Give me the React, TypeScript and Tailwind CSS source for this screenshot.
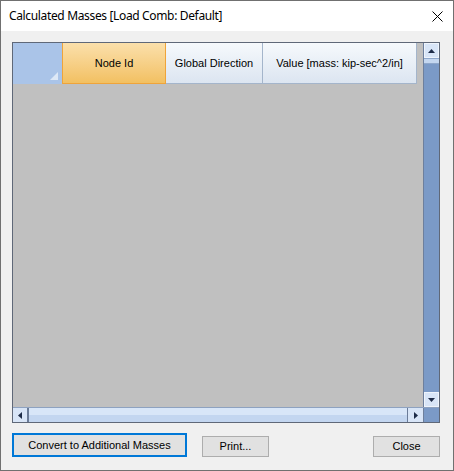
import React from "react";

const UpArrow = () => (
  <svg width="7" height="4" viewBox="0 0 7 4"><path d="M3.5 0 L7 4 L0 4 Z" fill="#1e2c48" /></svg>
);
const DownArrow = () => (
  <svg width="7" height="4" viewBox="0 0 7 4"><path d="M0 0 L7 0 L3.5 4 Z" fill="#1e2c48" /></svg>
);
const LeftArrow = () => (
  <svg width="4" height="7" viewBox="0 0 4 7"><path d="M4 0 L4 7 L0 3.5 Z" fill="#1e2c48" /></svg>
);
const RightArrow = () => (
  <svg width="4" height="7" viewBox="0 0 4 7"><path d="M0 0 L4 3.5 L0 7 Z" fill="#1e2c48" /></svg>
);

export default function App() {
  const ui = { fontFamily: '"Liberation Sans", Arial, sans-serif' };
  return (
    <div className="w-[454px] h-[471px] border border-[#707070] bg-[#f0f0f0] flex flex-col overflow-hidden">
      {/* title bar */}
      <div className="h-[30px] bg-white flex items-center justify-between pl-[8px] pr-[10px]">
        <span className="text-[12px] tracking-[-0.35px] text-black leading-none" style={{ fontFamily: '"Noto Sans", sans-serif' }}>
          Calculated Masses [Load Comb: Default]
        </span>
        <svg width="11" height="11" viewBox="0 0 11 11">
          <path d="M0.5 0.5 L10.5 10.5 M10.5 0.5 L0.5 10.5" stroke="#000" strokeWidth="1" />
        </svg>
      </div>

      {/* grid */}
      <div className="ml-[11px] mt-[11px] w-[428px] h-[381px] border border-[#5f6878] flex flex-col" style={ui}>
        <div className="flex h-[364px]">
          <div className="flex-1 flex flex-col bg-[#c0c0c0]">
            <div className="flex h-[41px] text-[11px] text-black">
              <div className="w-[49px] bg-[#aac4e8] relative">
                <svg className="absolute right-[4px] bottom-[4px]" width="8" height="8" viewBox="0 0 8 8">
                  <path d="M8 0 L8 8 L0 8 Z" fill="#dde8f6" />
                </svg>
              </div>
              <div className="w-[104px] border-x border-b border-[#efa43a] bg-gradient-to-b from-[#fbe0ab] to-[#f2c061] flex items-center justify-center">
                Node Id
              </div>
              <div className="w-[97px] border-r border-b border-[#a4b5cb] bg-gradient-to-b from-[#f6f9fc] to-[#dce5f1] flex items-center justify-center">
                Global Direction
              </div>
              <div className="w-[154px] border-r border-b border-[#a4b5cb] bg-gradient-to-b from-[#f6f9fc] to-[#dce5f1] flex items-center justify-center">
                Value [mass: kip-sec^2/in]
              </div>
            </div>
          </div>
          {/* vertical scrollbar */}
          <div className="w-[16px] flex flex-col bg-[#7b9ac7] border-l border-[#6d7f9c]">
            <div className="h-[15px] bg-[#d8e5f7] border border-[#eef4fc] flex items-center justify-center">
              <UpArrow />
            </div>
            <div className="h-[6px] bg-[#c4d7f0] border-y border-[#8ea7cb]" />
            <div className="flex-1" />
            <div className="h-[15px] bg-[#d8e5f7] border border-[#eef4fc] flex items-center justify-center">
              <DownArrow />
            </div>
          </div>
        </div>
        {/* horizontal scrollbar */}
        <div className="flex h-[15px] border-t border-[#8ea2c0]">
          <div className="w-[16px] bg-[#d8e5f7] flex items-center justify-center border-r-2 border-[#6b7c98]">
            <LeftArrow />
          </div>
          <div className="flex-1 flex flex-col">
            <div className="flex-1 bg-[#d8e6f8]" />
            <div className="flex-1 bg-[#c3d6f0]" />
          </div>
          <div className="w-[16px] bg-[#d8e5f7] flex items-center justify-center border-l border-[#6b7c98]">
            <RightArrow />
          </div>
          <div className="w-[16px] bg-[#7b9ac7] border-l border-[#6d7f9c]" />
        </div>
      </div>

      {/* buttons */}
      <div className="flex items-end ml-[11px] mt-[10px] h-[24px] text-[11px] text-black" style={ui}>
        <div className="w-[175px] h-[24px] border-2 border-[#0078d7] bg-[#e1e1e1] flex items-center justify-center">
          Convert to Additional Masses
        </div>
        <div className="ml-[15px] w-[67px] h-[21px] border border-[#adadad] bg-[#e1e1e1] flex items-center justify-center">
          Print...
        </div>
        <div className="ml-[104px] w-[67px] h-[21px] border border-[#adadad] bg-[#e1e1e1] flex items-center justify-center">
          Close
        </div>
      </div>
    </div>
  );
}
